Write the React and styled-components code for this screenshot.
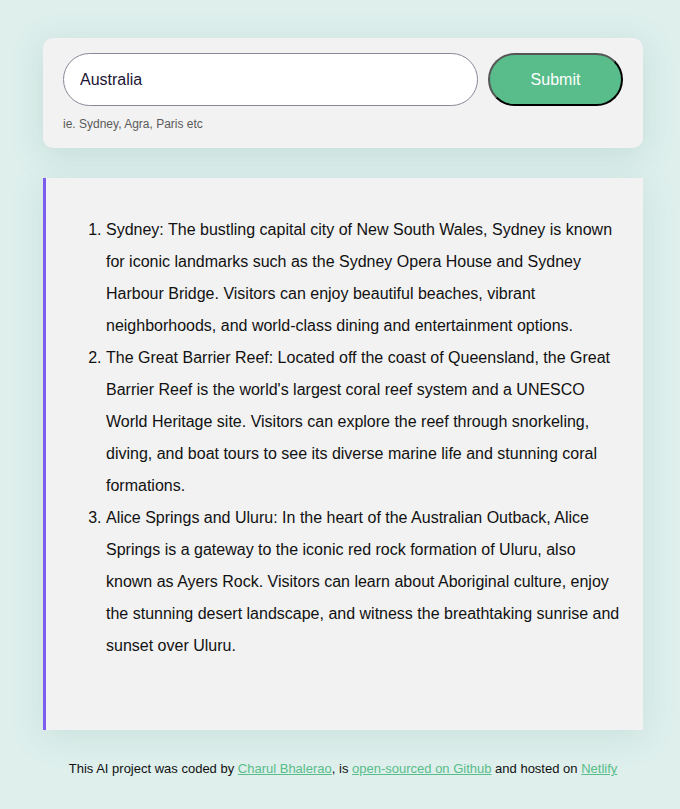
import React from "react";
import styled, { createGlobalStyle } from "styled-components";

const GlobalStyle = createGlobalStyle`
  body {
    margin: 0;
    background: #deefec;
    font-family: "Liberation Sans", Arial, sans-serif;
  }
`;

const Page = styled.main`
  width: 600px;
  margin: 0 auto;
  padding: 38px 0 0 6px;
`;

const FormCard = styled.form`
  background: #f2f2f2;
  border-radius: 10px;
  padding: 15px 20px 17px;
  box-shadow: 0 6px 30px rgba(120, 170, 160, 0.25);
`;

const Row = styled.div`
  display: flex;
  gap: 10px;
`;

const SearchInput = styled.input`
  flex: 1;
  height: 53px;
  box-sizing: border-box;
  border: 1px solid #8c8798;
  border-radius: 30px;
  padding: 0 16px;
  font-family: "Liberation Sans", Arial, sans-serif;
  font-size: 16px;
  color: #1c1535;
  background: #fff;
  outline: none;
`;

const SubmitButton = styled.button`
  width: 135px;
  height: 53px;
  box-sizing: border-box;
  background: #58bd8a;
  border: 2px outset #555;
  border-radius: 30px;
  color: #fff;
  font-family: "Liberation Sans", Arial, sans-serif;
  font-size: 16px;
  cursor: pointer;
`;

const Hint = styled.small`
  display: block;
  margin-top: 11px;
  font-size: 12px;
  color: #5a5a5a;
`;

const Results = styled.section`
  margin-top: 30px;
  background: #f2f2f2;
  border-left: 3px solid #7d5cf0;
  padding: 20px 20px 52px;
  color: #111;
  font-size: 16px;
  line-height: 2;
  box-shadow: 0 6px 30px rgba(120, 170, 160, 0.2);

  ol {
    margin: 16px 0;
    padding-left: 40px;
  }
`;

const Footer = styled.footer`
  margin-top: 31px;
  text-align: center;
  font-size: 13px;
  color: #111;

  a {
    color: #58bd8a;
  }
`;

const places = [
  "Sydney: The bustling capital city of New South Wales, Sydney is known for iconic landmarks such as the Sydney Opera House and Sydney Harbour Bridge. Visitors can enjoy beautiful beaches, vibrant neighborhoods, and world-class dining and entertainment options.",
  "The Great Barrier Reef: Located off the coast of Queensland, the Great Barrier Reef is the world's largest coral reef system and a UNESCO World Heritage site. Visitors can explore the reef through snorkeling, diving, and boat tours to see its diverse marine life and stunning coral formations.",
  "Alice Springs and Uluru: In the heart of the Australian Outback, Alice Springs is a gateway to the iconic red rock formation of Uluru, also known as Ayers Rock. Visitors can learn about Aboriginal culture, enjoy the stunning desert landscape, and witness the breathtaking sunrise and sunset over Uluru.",
];

export default function App() {
  return (
    <>
      <GlobalStyle />
      <Page>
        <FormCard onSubmit={(e) => e.preventDefault()}>
          <Row>
            <SearchInput type="search" defaultValue="Australia" />
            <SubmitButton type="submit">Submit</SubmitButton>
          </Row>
          <Hint>ie. Sydney, Agra, Paris etc</Hint>
        </FormCard>
        <Results>
          <ol>
            {places.map((p) => (
              <li key={p}>{p}</li>
            ))}
          </ol>
        </Results>
        <Footer>
          This AI project was coded by <a href="#">Charul Bhalerao</a>, is{" "}
          <a href="#">open-sourced on Github</a> and hosted on{" "}
          <a href="#">Netlify</a>
        </Footer>
      </Page>
    </>
  );
}
